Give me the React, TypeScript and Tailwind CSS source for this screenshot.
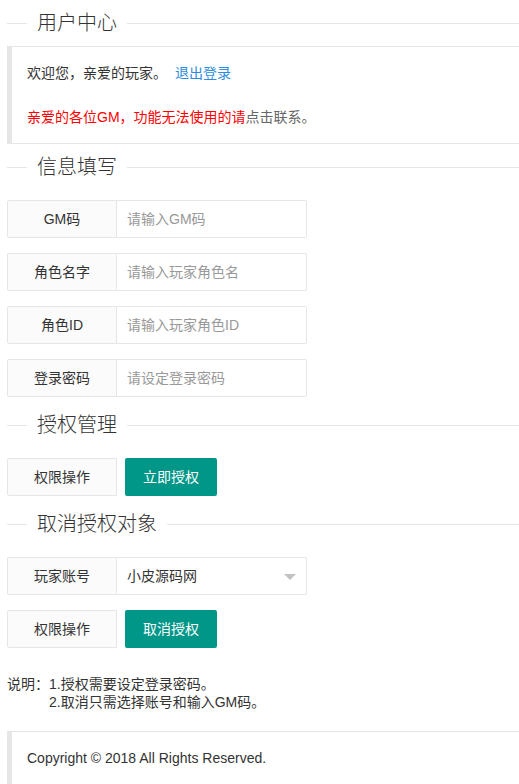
import React from 'react';

const font = { fontFamily: '"Liberation Sans", "Noto Sans CJK SC", sans-serif' };

function Legend({ title, className = '' }: { title: string; className?: string }) {
  return (
    <div className={`flex items-center h-[26px] ${className}`}>
      <div className="w-[20px] h-px bg-[#e6e6e6]" />
      <span className="px-[10px] text-[20px] font-light leading-[26px] text-[#333]">{title}</span>
      <div className="flex-1 h-px bg-[#e6e6e6]" />
    </div>
  );
}

function Label({ text }: { text: string }) {
  return (
    <div className="w-[110px] h-[38px] shrink-0 flex items-center justify-center border border-[#e6e6e6] bg-[#fbfbfb] rounded-l-[2px] text-[14px] text-[#333]">
      {text}
    </div>
  );
}

function InputRow({ label, placeholder, className = '' }: { label: string; placeholder: string; className?: string }) {
  return (
    <div className={`flex ${className}`}>
      <Label text={label} />
      <input
        placeholder={placeholder}
        className="w-[190px] h-[38px] border border-l-0 border-[#e6e6e6] rounded-r-[2px] pl-[10px] text-[14px] text-[#333] placeholder:text-[#999] outline-none bg-white"
        style={font}
      />
    </div>
  );
}

function ActionRow({ text, className = '' }: { text: string; className?: string }) {
  return (
    <div className={`flex ${className}`}>
      <Label text="权限操作" />
      <button className="ml-[8px] h-[38px] px-[18px] bg-[#009688] text-white text-[14px] rounded-[2px]" style={font}>
        {text}
      </button>
    </div>
  );
}

export default function App() {
  return (
    <div className="min-h-screen bg-white pl-[7px] text-[14px] text-[#333] overflow-hidden" style={font}>
      <Legend title="用户中心" className="mt-[10px]" />

      <div className="mt-[10px] border border-r-0 border-l-[5px] border-[#e6e6e6] p-[15px] leading-[22px]">
        <p>
          欢迎您，亲爱的玩家。<a className="ml-[8px] text-[#2d8ce0] cursor-pointer">退出登录</a>
        </p>
        <br />
        <p>
          <span className="text-[#ff0000]">亲爱的各位GM，功能无法使用的请</span>
          <span className="text-[#666]">点击联系。</span>
        </p>
      </div>

      <Legend title="信息填写" className="mt-[10px]" />

      <div className="mt-[20px] flex flex-col gap-[15px]">
        <InputRow label="GM码" placeholder="请输入GM码" />
        <InputRow label="角色名字" placeholder="请输入玩家角色名" />
        <InputRow label="角色ID" placeholder="请输入玩家角色ID" />
        <InputRow label="登录密码" placeholder="请设定登录密码" />
      </div>

      <Legend title="授权管理" className="mt-[15px]" />
      <ActionRow text="立即授权" className="mt-[20px]" />

      <Legend title="取消授权对象" className="mt-[15px]" />

      <div className="mt-[20px] flex">
        <Label text="玩家账号" />
        <div className="relative w-[190px] h-[38px] border border-l-0 border-[#e6e6e6] rounded-r-[2px] pl-[10px] flex items-center text-[14px] text-[#333]">
          小皮源码网
          <svg className="absolute right-[10px] top-[16px]" width="12" height="6" viewBox="0 0 12 6">
            <path d="M0 0 L12 0 L6 6 Z" fill="#c2c2c2" />
          </svg>
        </div>
      </div>

      <ActionRow text="取消授权" className="mt-[15px]" />

      <div className="mt-[27px] flex leading-[18px] text-[14px] text-[#333]">
        <span>说明：</span>
        <div className="flex flex-col">
          <span>1.授权需要设定登录密码。</span>
          <span>2.取消只需选择账号和输入GM码。</span>
        </div>
      </div>

      <div className="mt-[20px] border border-r-0 border-l-[5px] border-[#e6e6e6] p-[15px] leading-[22px] text-[#333]">
        Copyright © 2018 All Rights Reserved.
      </div>
    </div>
  );
}
